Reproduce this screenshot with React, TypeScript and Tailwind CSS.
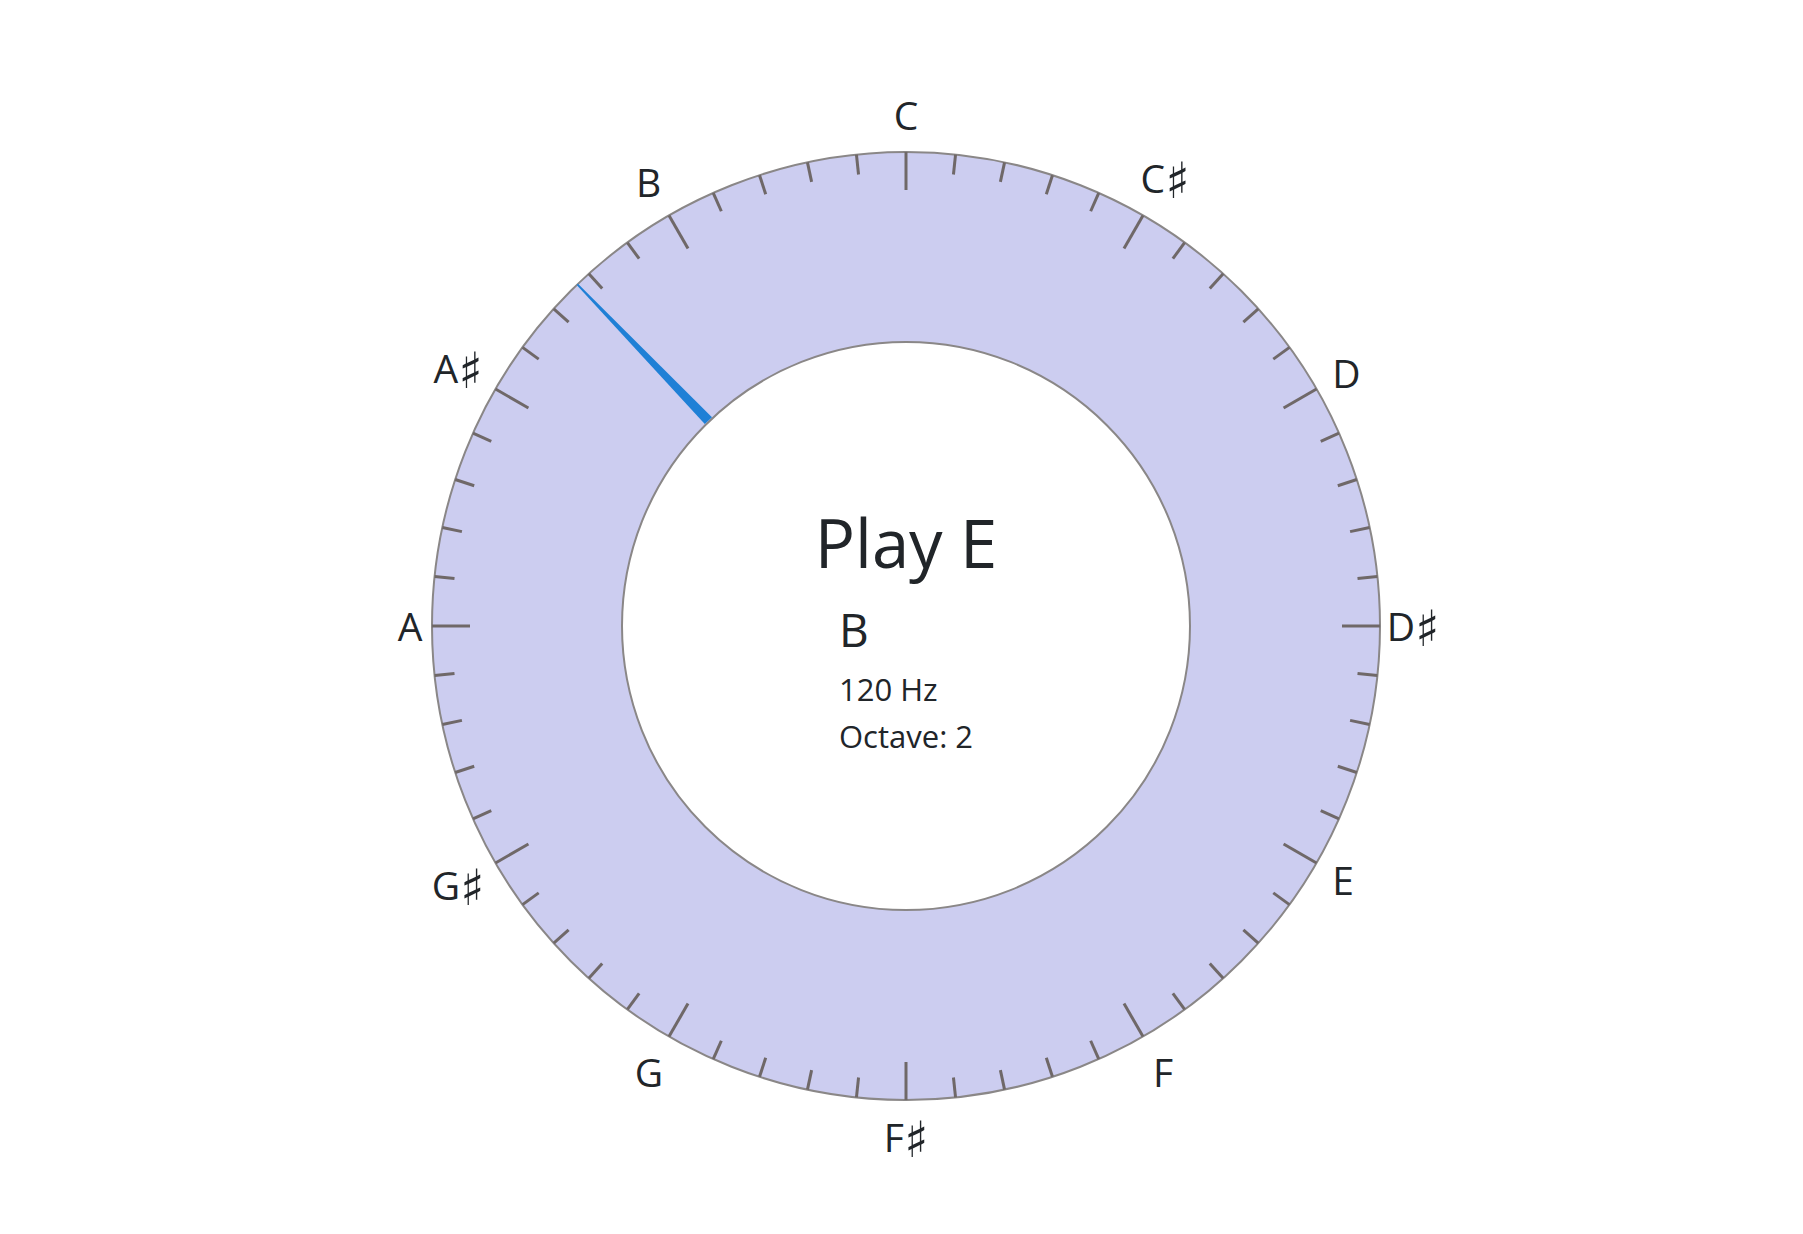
const CX = 550
const CY = 550
const R_OUT = 474
const R_IN = 284

const labels = [
  { note: 'C', sharp: false, x: 550, y: 39.5 },
  { note: 'C', sharp: true, x: 809, y: 103 },
  { note: 'D', sharp: false, x: 990.5, y: 297.5 },
  { note: 'D', sharp: true, x: 1057, y: 551 },
  { note: 'E', sharp: false, x: 987, y: 805 },
  { note: 'F', sharp: false, x: 807, y: 997 },
  { note: 'F', sharp: true, x: 550, y: 1062 },
  { note: 'G', sharp: false, x: 293, y: 997 },
  { note: 'G', sharp: true, x: 102, y: 810 },
  { note: 'A', sharp: false, x: 54, y: 551 },
  { note: 'A', sharp: true, x: 102, y: 293 },
  { note: 'B', sharp: false, x: 292.5, y: 106.5 },
]

const pt = (deg: number, r: number, off = 0) => {
  const a = (deg * Math.PI) / 180
  const ux = Math.sin(a)
  const uy = -Math.cos(a)
  return `${CX + r * ux + off * Math.cos(a)},${CY + r * uy + off * Math.sin(a)}`
}

const Dial = () => {
  const ticks = Array.from({ length: 60 }, (_, i) => i)
  const needle = -43.9
  return (
    <svg width="1100" height="1100" viewBox="0 0 1100 1100" className="block">
      <circle cx={CX} cy={CY} r={R_OUT} fill="#cccdf0" stroke="#8a8787" strokeWidth="2" />
      <circle cx={CX} cy={CY} r={R_IN} fill="#ffffff" stroke="#8a8787" strokeWidth="2" />
      {ticks.map((i) => {
        const len = i % 5 === 0 ? 38 : 20
        const [x1, y1] = pt(i * 6, R_OUT).split(',')
        const [x2, y2] = pt(i * 6, R_OUT - len).split(',')
        return <line key={i} x1={x1} y1={y1} x2={x2} y2={y2} stroke="#6f6868" strokeWidth="3" />
      })}
      <polygon
        points={[pt(needle, R_OUT, -0.9), pt(needle, R_OUT, 0.9), pt(needle, R_IN + 1, 5), pt(needle, R_IN + 1, -5)].join(' ')}
        fill="#1f80d6"
      />
      {labels.map((l) => (
        <text
          key={l.note + l.sharp}
          x={l.x}
          y={l.y + 14}
          textAnchor="middle"
          fontSize="39"
          fill="#212529"
          style={{ fontFamily: '"Open Sans", "DejaVu Sans", sans-serif' }}
        >
          {l.note}
          {l.sharp && (
            <tspan dy="5" fontSize="50" style={{ fontFamily: '"DejaVu Sans", sans-serif' }}>
              ♯
            </tspan>
          )}
        </text>
      ))}
    </svg>
  )
}

export default function App() {
  return (
    <div className="flex min-h-screen justify-center bg-white pl-[9px] pt-[76px] font-['Open_Sans',_'DejaVu_Sans',_sans-serif] text-[#212529]">
      <div className="relative h-[1100px] w-[1100px]">
        <Dial />
        <div className="absolute left-0 top-[433px] w-full text-center text-[67px] leading-none">Play E</div>
        <div className="absolute left-[483px] top-[530px] flex flex-col">
          <span className="text-[46px] leading-none">B</span>
          <span className="mt-[22px] text-[31px] leading-none">120 Hz</span>
          <span className="mt-[16px] text-[31px] leading-none">Octave: 2</span>
        </div>
      </div>
    </div>
  )
}
